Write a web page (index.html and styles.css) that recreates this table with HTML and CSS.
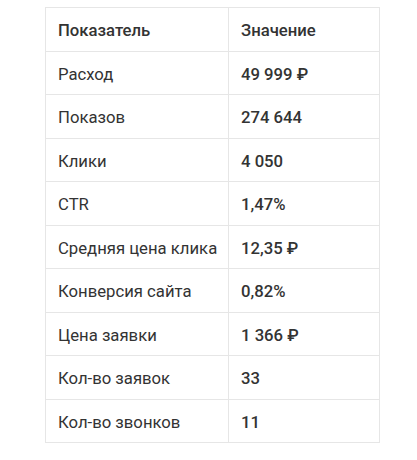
FILE: index.html
```html
<!DOCTYPE html>
<html lang="ru">
<head>
<meta charset="utf-8">
<link rel="stylesheet" href="styles.css">
</head>
<body>
<div class="wrap">
<table class="stats">
<colgroup><col class="c1"><col class="c2"></colgroup>
<thead>
<tr><th>Показатель</th><th>Значение</th></tr>
</thead>
<tbody>
<tr><td>Расход</td><td class="val">49 999 ₽</td></tr>
<tr><td>Показов</td><td class="val">274 644</td></tr>
<tr><td>Клики</td><td class="val">4 050</td></tr>
<tr><td>CTR</td><td class="val">1,47%</td></tr>
<tr><td>Средняя цена клика</td><td class="val">12,35 ₽</td></tr>
<tr><td>Конверсия сайта</td><td class="val">0,82%</td></tr>
<tr><td>Цена заявки</td><td class="val">1 366 ₽</td></tr>
<tr><td>Кол-во заявок</td><td class="val">33</td></tr>
<tr><td>Кол-во звонков</td><td class="val">11</td></tr>
</tbody>
</table>
</div>
</body>
</html>
```
FILE: styles.css
```css
html, body {
  margin: 0;
  background: #fff;
}
.wrap {
  padding: 7px 0 0 45px;
}
.stats {
  border-collapse: collapse;
  table-layout: fixed;
  font-family: Roboto, "Noto Sans", sans-serif;
  font-size: 16.7px;
  color: #333;
  width: 334px;
}
.c1 { width: 183px; }
.c2 { width: 151px; }
.stats th, .stats td {
  border: 1px solid #e6e6e6;
  padding: 11px 12px 7px;
  line-height: 24.5px;
  text-align: left;
  font-weight: 400;
  white-space: nowrap;
}
.stats th {
  font-weight: 500;
}
.stats td.val {
  font-weight: 500;
  color: #333;
}
```
